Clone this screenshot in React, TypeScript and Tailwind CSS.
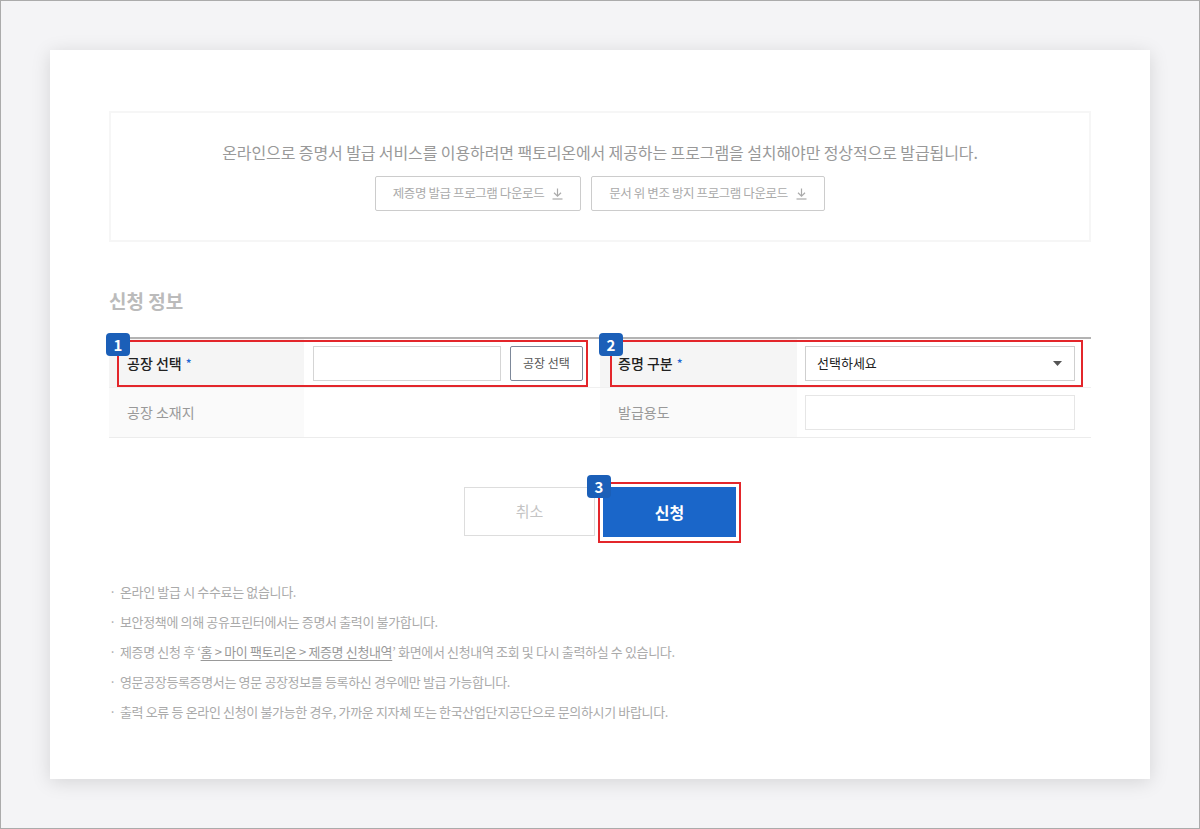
import React from 'react';

const font = { fontFamily: '"Noto Sans CJK KR", "Noto Sans", sans-serif' };

function DownloadIcon() {
  return (
    <svg width="11" height="12" viewBox="0 0 11 12" fill="none" stroke="currentColor" strokeWidth="1.2">
      <path d="M5.5 0.5V8" />
      <path d="M2 4.8L5.5 8.2L9 4.8" />
      <path d="M0.5 11H10.5" />
    </svg>
  );
}

function Badge({ n }: { n: number }) {
  return (
    <span className="absolute flex h-[23px] w-[24px] items-center justify-center rounded-[4px] bg-[#1b5fb8] text-[15px] font-bold leading-none text-white">
      {n}
    </span>
  );
}

export default function App() {
  const notes = [
    '온라인 발급 시 수수료는 없습니다.',
    '보안정책에 의해 공유프린터에서는 증명서 출력이 불가합니다.',
    null,
    '영문공장등록증명서는 영문 공장정보를 등록하신 경우에만 발급 가능합니다.',
    '출력 오류 등 온라인 신청이 불가능한 경우, 가까운 지자체 또는 한국산업단지공단으로 문의하시기 바랍니다.',
  ];

  return (
    <div style={font} className="h-[829px] w-[1200px] overflow-hidden border border-[#ababab] bg-[#f4f4f6] pl-[49px] pt-[49px]">
      <div className="h-[729px] w-[1100px] bg-white px-[59px] pt-[61px] shadow-[0_3px_18px_rgba(0,0,0,0.13)]">
        {/* 안내 박스 */}
        <div className="flex h-[131px] flex-col items-center border-2 border-[#f6f6f6] pt-[27px]">
          <p className="text-[16px] leading-[24px] tracking-[-0.1px] text-[#999999]">
            온라인으로 증명서 발급 서비스를 이용하려면 팩토리온에서 제공하는 프로그램을 설치해야만 정상적으로 발급됩니다.
          </p>
          <div className="mt-[12px] flex gap-[10px]">
            <button className="flex h-[35px] w-[206px] items-center justify-center gap-[8px] rounded-[2px] border border-[#cccccc] text-[12.5px] tracking-[-0.4px] text-[#aaaaaa]">
              제증명 발급 프로그램 다운로드
              <DownloadIcon />
            </button>
            <button className="flex h-[35px] w-[234px] items-center justify-center gap-[8px] rounded-[2px] border border-[#cccccc] text-[12.5px] tracking-[-0.4px] text-[#aaaaaa]">
              문서 위 변조 방지 프로그램 다운로드
              <DownloadIcon />
            </button>
          </div>
        </div>

        {/* 신청 정보 */}
        <h2 className="mt-[45px] text-[19px] font-bold leading-[28px] text-[#bbbbbb]">신청 정보</h2>

        <div className="mt-[22px] border-t-2 border-[#b3b3b3]">
          {/* row 1 */}
          <div className="relative grid h-[49px] grid-cols-2 border-b border-[#f0f0f0]">
            <div className="flex">
              <div className="flex w-[195px] items-center bg-[#f5f5f5] pl-[18px] text-[14px] font-medium text-[#222222]">
                공장 선택 <span className="ml-[4px] text-[12px] text-[#1a66d2]">*</span>
              </div>
              <div className="flex items-center gap-[9px] pl-[9px]">
                <input className="h-[35px] w-[188px] border border-[#d5d5d5] bg-white" />
                <button className="h-[35px] w-[73px] rounded-[2px] border border-[#7d8899] text-[12px] text-[#555555]">
                  공장 선택
                </button>
              </div>
            </div>
            <div className="flex">
              <div className="flex w-[197px] items-center bg-[#f5f5f5] pl-[18px] text-[14px] font-medium text-[#222222]">
                증명 구분 <span className="ml-[4px] text-[12px] text-[#1a66d2]">*</span>
              </div>
              <div className="flex items-center pl-[8px]">
                <div className="flex h-[35px] w-[270px] items-center justify-between border border-[#cfcfcf] pl-[11px] pr-[12px] text-[13px] text-[#222222]">
                  선택하세요
                  <svg width="9" height="5" viewBox="0 0 9 5">
                    <path d="M0 0H9L4.5 5Z" fill="#555555" />
                  </svg>
                </div>
              </div>
            </div>
            <div className="pointer-events-none absolute left-[8px] top-[1px] h-[47px] w-[471px] border-2 border-[#e3262b]" />
            <div className="absolute left-[-3px] top-[-6px]"><Badge n={1} /></div>
            <div className="pointer-events-none absolute left-[501px] top-[1px] h-[47px] w-[473px] border-2 border-[#e3262b]" />
            <div className="absolute left-[490px] top-[-6px]"><Badge n={2} /></div>
          </div>

          {/* row 2 */}
          <div className="grid h-[50px] grid-cols-2 border-b border-[#ececec]">
            <div className="flex">
              <div className="flex w-[195px] items-center bg-[#fafafa] pl-[18px] text-[14px] text-[#999999]">
                공장 소재지
              </div>
            </div>
            <div className="flex">
              <div className="flex w-[197px] items-center bg-[#fafafa] pl-[18px] text-[14px] text-[#999999]">
                발급용도
              </div>
              <div className="flex items-center pl-[8px]">
                <div className="h-[35px] w-[270px] border border-[#e6e6e6]" />
              </div>
            </div>
          </div>
        </div>

        {/* 버튼 */}
        <div className="mt-[49px] flex justify-center gap-[8px]">
          <button className="h-[49px] w-[131px] border border-[#dddddd] text-[15px] text-[#c4c4c4]">취소</button>
          <div className="relative">
            <button className="h-[50px] w-[133px] bg-[#1a66c9] text-[16px] font-bold text-white">신청</button>
            <div className="pointer-events-none absolute left-[-5px] top-[-5px] h-[61px] w-[143px] border-2 border-[#e3262b]" />
            <div className="absolute left-[-16px] top-[-12px]"><Badge n={3} /></div>
          </div>
        </div>

        {/* 안내 문구 */}
        <ul className="mt-[40px] text-[13px] leading-[30px] tracking-[-0.35px] text-[#aaaaaa]">
          {notes.map((note, i) => (
            <li key={i} className="flex">
              <span className="mr-[4px]">·</span>
              {note ?? (
                <span>
                  제증명 신청 후 ‘<span className="text-[#999999] underline underline-offset-[3px]">홈 &gt; 마이 팩토리온 &gt; 제증명 신청내역</span>’ 화면에서 신청내역 조회 및 다시 출력하실 수 있습니다.
                </span>
              )}
            </li>
          ))}
        </ul>
      </div>
    </div>
  );
}
